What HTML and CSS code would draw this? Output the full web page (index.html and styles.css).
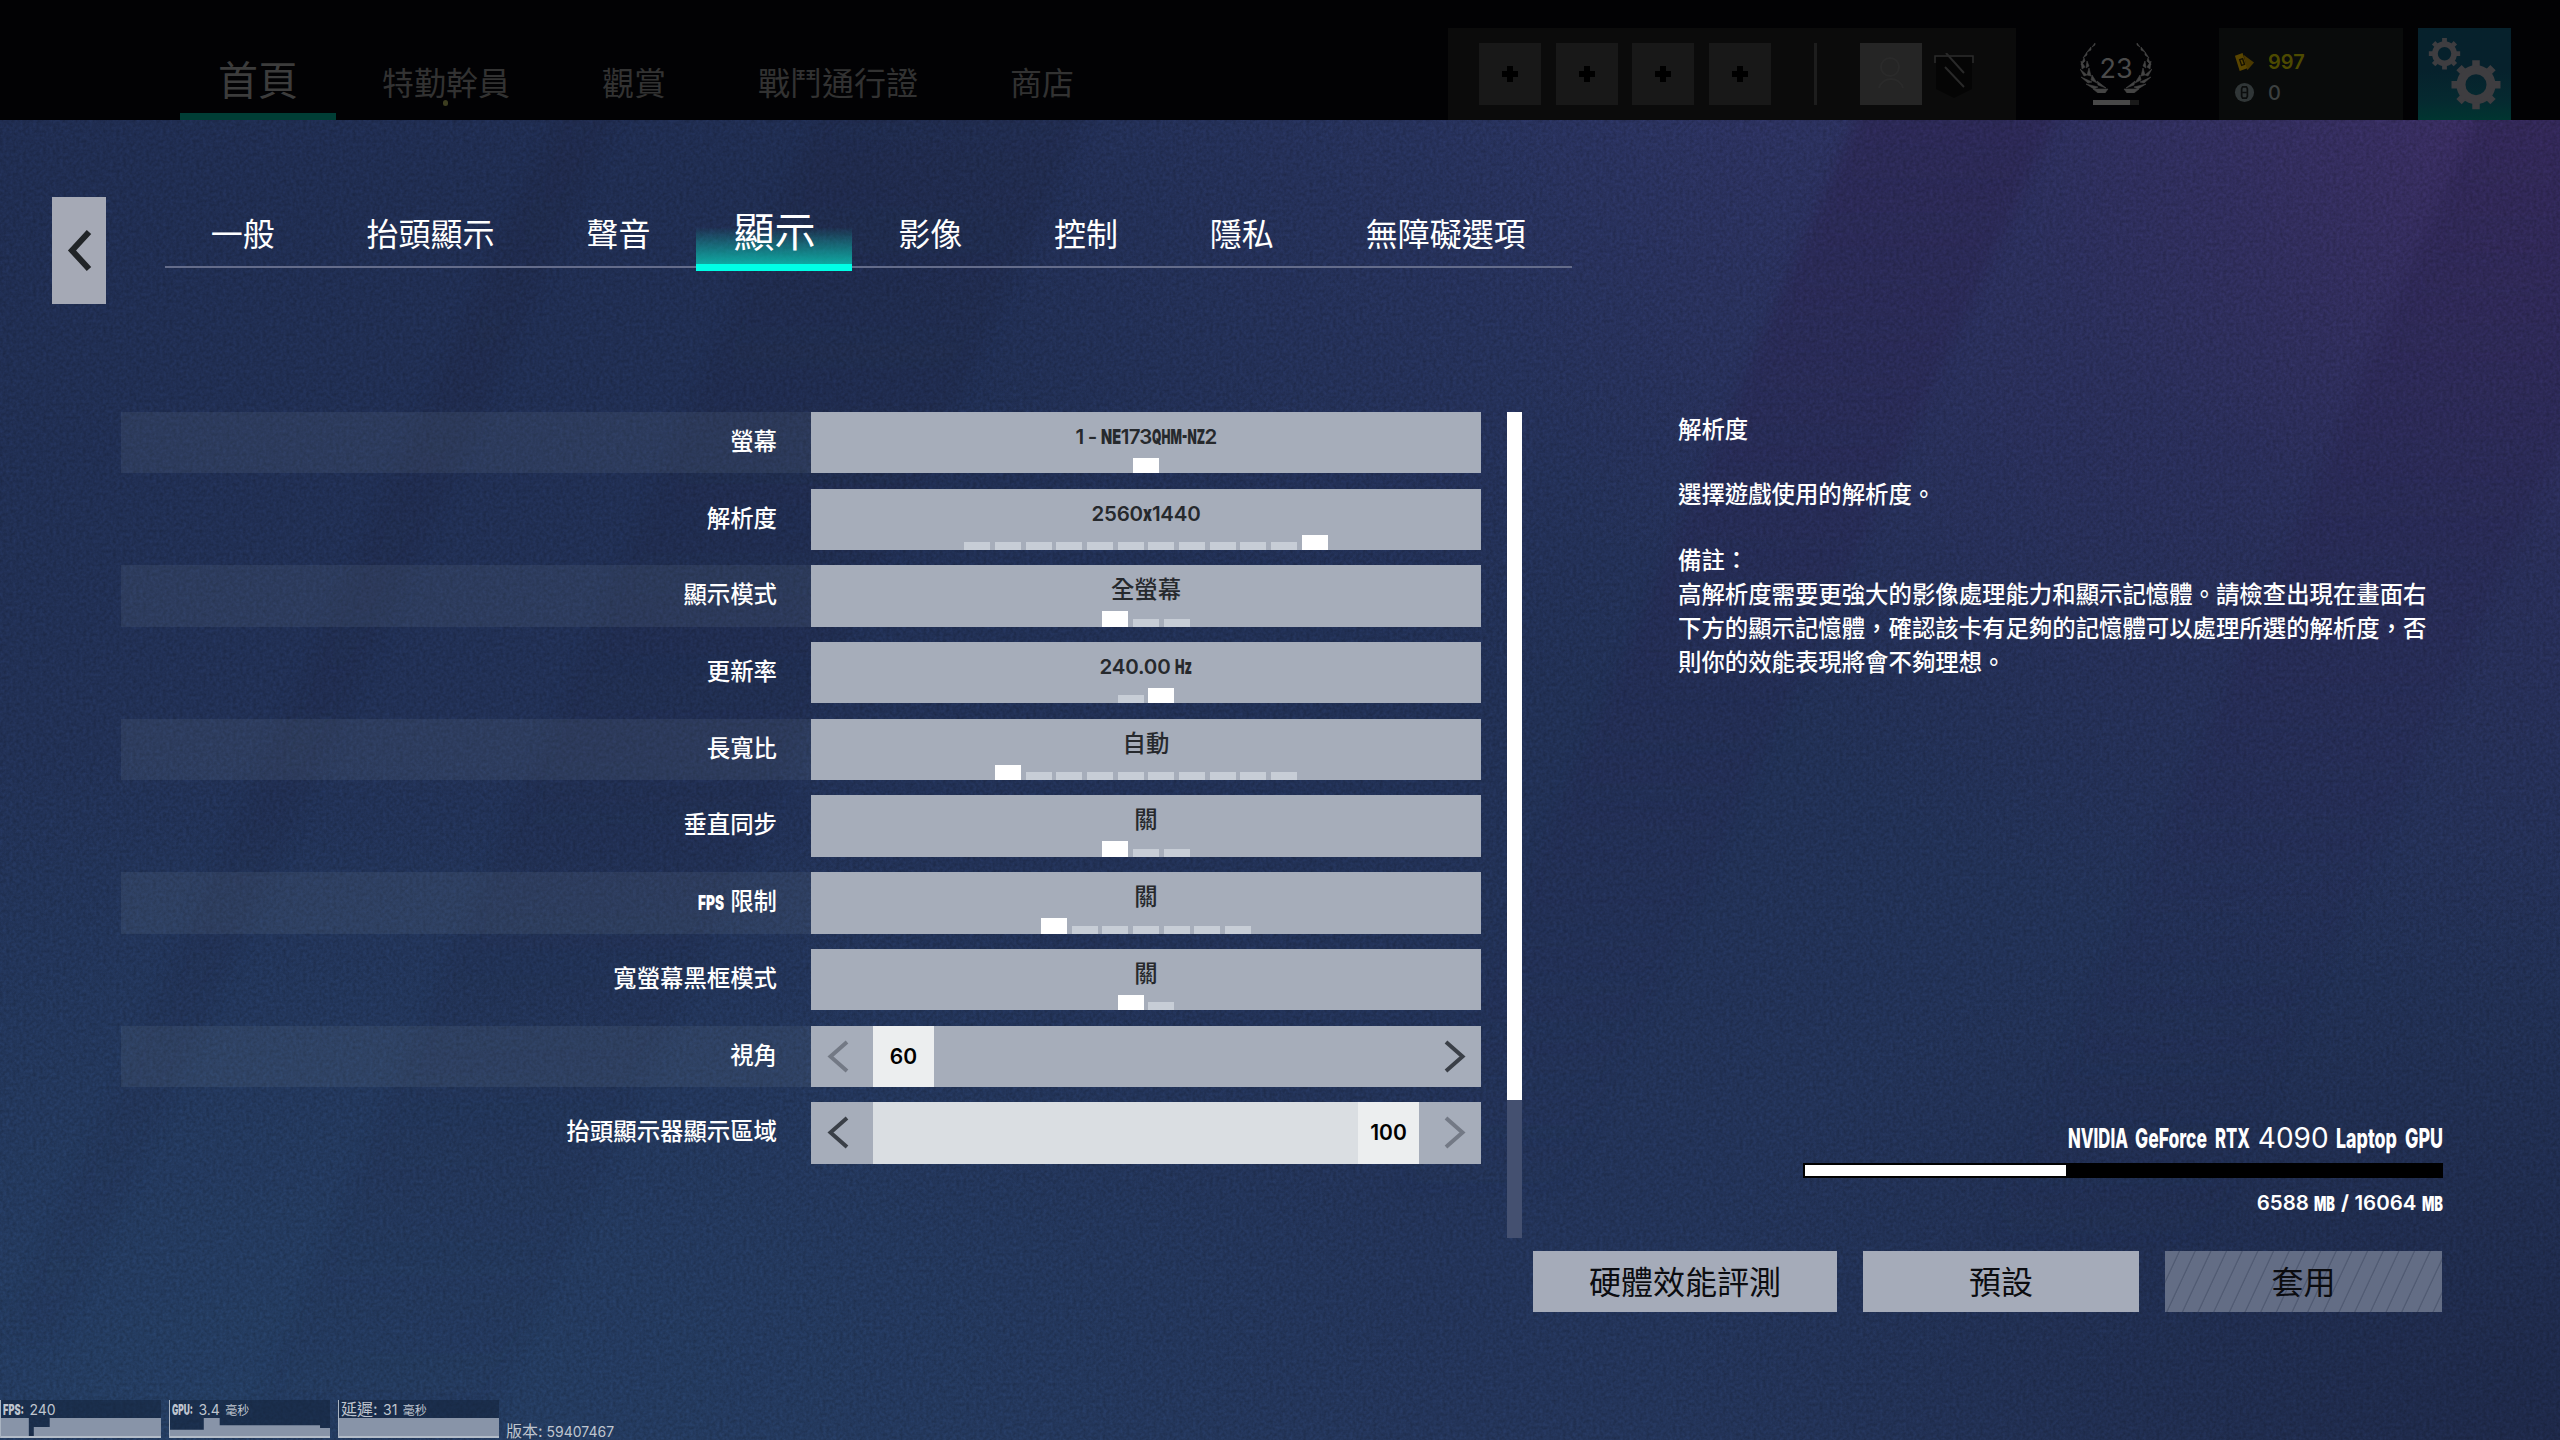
FILE: index.html
```html
<!DOCTYPE html>
<html lang="zh-Hant">
  <head>
    <meta charset="utf-8">
    <title>顯示</title>
    <link rel="stylesheet" href="styles.css">
  </head>
  <body>
    <!-- backdrop: light streaks and grain -->
    <svg class="backdrop" viewBox="0 0 2560 1440" preserveAspectRatio="none">
      <defs>
        <linearGradient id="fadeDown" x1="0" y1="0" x2="0" y2="1">
          <stop offset="0" stop-color="#2c2450" stop-opacity=".6"/>
          <stop offset="1" stop-color="#202750" stop-opacity="0"/>
        </linearGradient>
        <linearGradient id="dark" x1="0" y1="0" x2="0" y2="1">
          <stop offset="0" stop-color="#1e2746" stop-opacity=".4"/>
          <stop offset="1" stop-color="#1e2746" stop-opacity=".1"/>
        </linearGradient>
        <filter id="soft" color-interpolation-filters="sRGB"><feGaussianBlur stdDeviation="7"/></filter>
        <filter id="grain" x="0" y="0" width="100%" height="100%" color-interpolation-filters="sRGB">
          <feTurbulence type="fractalNoise" baseFrequency=".3" numOctaves="2" seed="4"/>
          <feColorMatrix values="1 0 0 0 0  1 0 0 0 0  1 0 0 0 0  0 0 0 0 1"/>
        </filter>
      </defs>
      <g filter="url(#soft)">
        <polygon points="1860,110 2060,110 1560,1200 1390,1200" fill="url(#fadeDown)"/>
        <polygon points="2480,110 2570,110 2570,420 2200,1250 1980,1250" fill="url(#fadeDown)"/>
        <polygon points="820,110 1090,110 480,1440 240,1440" fill="url(#dark)"/>
        <polygon points="560,110 620,110 60,1340 0,1340" fill="url(#dark)"/>
      </g>
      <rect class="grain" width="2560" height="1440" filter="url(#grain)"/>
    </svg>

    <header>
      <nav class="menu">
        <a class="current">首頁</a>
        <a class="new">特勤幹員</a>
        <a>觀賞</a>
        <a>戰鬥通行證</a>
        <a>商店</a>
      </nav>
      <div class="squad">
        <b class="slot"></b><b class="slot"></b><b class="slot"></b><b class="slot"></b>
        <i class="divider"></i>
        <svg class="avatar" viewBox="0 0 62 62">
          <circle cx="30" cy="24" r="9"/>
          <path d="M19 45c3-12 21-12 24 0"/>
        </svg>
        <svg class="banner" viewBox="0 0 40 46">
          <path d="M2 4h36v32l-18 9-18-9z" fill="#050505"/>
          <path d="M1 10V3h38v7" fill="none" stroke="#2c2c2c" stroke-width="1.5"/>
          <path d="M12 0l18 20M11 14l19 20" stroke="#292929" stroke-width="2"/>
        </svg>
      </div>
      <div class="rank">
        <svg viewBox="0 0 72 50">
          <defs>
            <g id="branch">
              <path d="M15 0l-3 4 3-2zM11 4l-4 5 4-2zM7 9l-4 6 4-3zM4 15l-3 7 4-4zM1 18l1 8 3-2zM7 18l-1 7 3-2zM0 26l4 7 3-1zM9 25l-2 7 4 1zM1 34l7 6 4-1zM12 32l-1 5 6 3zM6 41l8 5 4-2zM17 38l1 4 8 3zM13 46h15l-3 4h-7z"/>
            </g>
          </defs>
          <use href="#branch"/>
          <use href="#branch" transform="translate(72 0) scale(-1 1)"/>
        </svg>
        <span>23</span>
        <div class="xp"><i></i></div>
      </div>
      <div class="wallet">
        <div class="renown">
          <svg viewBox="0 0 22 22"><path d="M10 3l11 8-7 8z" fill="#4a3800"/><path d="M1 4l8-3 5 16-8 3z" fill="#594500"/><path d="M6 8l3-1 2 6-3 1z" fill="none" stroke="#171200" stroke-width="1.5"/></svg>
          <span>997</span>
        </div>
        <div class="credits">
          <svg viewBox="0 0 22 22"><circle cx="11" cy="11" r="10" fill="#303637"/><path d="M9 5h4l1 2v8l-1 2H9l-1-2V7zM9 11h4" fill="none" stroke="#0b0d0d" stroke-width="1.8"/></svg>
          <span>0</span>
        </div>
      </div>
      <svg class="settings" viewBox="0 0 93 92">
        <defs>
          <g id="gear">
            <circle r="15" fill="none" stroke-width="9"/>
            <path d="M0-18V-24.5M0 18V24.5M-18 0H-24.5M18 0H24.5M-13-13L-17-17M13 13L17 17M-13 13L-17 17M13-13L17-17" stroke-width="7.5"/>
          </g>
        </defs>
        <use href="#gear" transform="translate(26.500 25.700) scale(.64)"/>
        <use href="#gear" transform="translate(58 56.700)"/>
      </svg>
    </header>

    <div class="top">
      <a class="back"><svg viewBox="0 0 54 107"><path d="M37 35L20 53.500 37 72"/></svg></a>
      <nav class="tabs">
        <a>一般</a>
        <a>抬頭顯示</a>
        <a>聲音</a>
        <a class="active">顯示</a>
        <a>影像</a>
        <a>控制</a>
        <a>隱私</a>
        <a>無障礙選項</a>
      </nav>
    </div>

    <main>
      <ul class="options">
        <li>
          <label>螢幕</label>
          <div class="choice">
            <span class="mixed tight">1 - <svg class="narrow" width="20" height="15"><text y="15" textLength="20" lengthAdjust="spacingAndGlyphs">NE</text></svg>173<svg class="narrow" width="53" height="15"><text y="15" textLength="53" lengthAdjust="spacingAndGlyphs">QHM-NZ</text></svg>2</span>
            <div class="pips"><i class="on"></i></div>
          </div>
        </li>
        <li>
          <label>解析度</label>
          <div class="choice">
            <span class="mixed">2560<svg class="narrow" width="9" height="15"><text y="15" textLength="9" lengthAdjust="spacingAndGlyphs">x</text></svg>1440</span>
            <div class="pips"><i></i><i></i><i></i><i></i><i></i><i></i><i></i><i></i><i></i><i></i><i></i><i class="on"></i></div>
          </div>
        </li>
        <li>
          <label>顯示模式</label>
          <div class="choice">
            <span>全螢幕</span>
            <div class="pips"><i class="on"></i><i></i><i></i></div>
          </div>
        </li>
        <li>
          <label>更新率</label>
          <div class="choice">
            <span class="mixed">240.00 <svg class="narrow" width="17" height="15"><text y="15" textLength="17" lengthAdjust="spacingAndGlyphs">Hz</text></svg></span>
            <div class="pips"><i></i><i class="on"></i></div>
          </div>
        </li>
        <li>
          <label>長寬比</label>
          <div class="choice">
            <span>自動</span>
            <div class="pips"><i class="on"></i><i></i><i></i><i></i><i></i><i></i><i></i><i></i><i></i><i></i></div>
          </div>
        </li>
        <li>
          <label>垂直同步</label>
          <div class="choice">
            <span>關</span>
            <div class="pips"><i class="on"></i><i></i><i></i></div>
          </div>
        </li>
        <li>
          <label><svg class="narrow" width="26" height="15"><text y="15" textLength="26" lengthAdjust="spacingAndGlyphs">FPS</text></svg> 限制</label>
          <div class="choice">
            <span>關</span>
            <div class="pips"><i class="on"></i><i></i><i></i><i></i><i></i><i></i><i></i></div>
          </div>
        </li>
        <li>
          <label>寬螢幕黑框模式</label>
          <div class="choice">
            <span>關</span>
            <div class="pips"><i class="on"></i><i></i></div>
          </div>
        </li>
        <li>
          <label>視角</label>
          <div class="slider">
            <svg class="arrow off" viewBox="0 0 62 61"><path d="M36 16L19.500 30.500 36 45"/></svg>
            <div class="track"><b>60</b></div>
            <svg class="arrow" viewBox="0 0 62 61"><path d="M27 16L43.500 30.500 27 45"/></svg>
          </div>
        </li>
        <li>
          <label>抬頭顯示器顯示區域</label>
          <div class="slider">
            <svg class="arrow" viewBox="0 0 62 61"><path d="M36 16L19.500 30.500 36 45"/></svg>
            <div class="track full"><b>100</b></div>
            <svg class="arrow off" viewBox="0 0 62 61"><path d="M27 16L43.500 30.500 27 45"/></svg>
          </div>
        </li>
      </ul>
      <div class="scrollbar"><i></i></div>
      <aside>
        <h2>解析度</h2>
        <p>選擇遊戲使用的解析度。</p>
        <p class="note">備註：<br>高解析度需要更強大的影像處理能力和顯示記憶體。請檢查出現在畫面右<br>下方的顯示記憶體，確認該卡有足夠的記憶體可以處理所選的解析度，否<br>則你的效能表現將會不夠理想。</p>
        <div class="gpu">
          <div class="name">
            <svg class="narrow" width="60" height="20"><text y="20" textLength="60" lengthAdjust="spacingAndGlyphs">NVIDIA</text></svg>
            <svg class="narrow" width="72" height="20"><text y="20" textLength="72" lengthAdjust="spacingAndGlyphs">GeForce</text></svg>
            <svg class="narrow" width="35" height="20"><text y="20" textLength="35" lengthAdjust="spacingAndGlyphs">RTX</text></svg>
            <span>4090</span>
            <svg class="narrow" width="61" height="20"><text y="20" textLength="61" lengthAdjust="spacingAndGlyphs">Laptop</text></svg>
            <svg class="narrow" width="38" height="20"><text y="20" textLength="38" lengthAdjust="spacingAndGlyphs">GPU</text></svg>
          </div>
          <div class="vram"><i style="width: 41%"></i></div>
          <div class="memory">
            <span>6588</span>
            <svg class="narrow" width="21" height="15"><text y="15" textLength="21" lengthAdjust="spacingAndGlyphs">MB</text></svg>
            <b>/</b>
            <span>16064</span>
            <svg class="narrow" width="21" height="15"><text y="15" textLength="21" lengthAdjust="spacingAndGlyphs">MB</text></svg>
          </div>
        </div>
      </aside>
    </main>

    <div class="buttons">
      <a class="wide">硬體效能評測</a>
      <a>預設</a>
      <a class="disabled">套用</a>
    </div>

    <footer>
      <div class="stat">
        <div><svg class="narrow" width="21" height="11"><text y="11" textLength="21" lengthAdjust="spacingAndGlyphs">FPS:</text></svg> 240</div>
        <svg class="graph" viewBox="0 0 161 20" preserveAspectRatio="none"><path d="M0 0H28V20H33V10H49V0H161V20H0z"/></svg>
      </div>
      <div class="stat">
        <div><svg class="narrow" width="21" height="11"><text y="11" textLength="21" lengthAdjust="spacingAndGlyphs">GPU:</text></svg> 3.4 <small>毫秒</small></div>
        <svg class="graph" viewBox="0 0 161 20" preserveAspectRatio="none"><path d="M0 13H34V0H50V8H151V11H161V20H0z"/></svg>
      </div>
      <div class="stat">
        <div><em>延遲:</em> 31 <small>毫秒</small></div>
        <svg class="graph" viewBox="0 0 161 20" preserveAspectRatio="none"><path d="M0 0H161V20H0z"/></svg>
      </div>
      <div class="version"><em>版本:</em> 59407467</div>
    </footer>
  </body>
</html>
```

FILE: styles.css
```css
* {
  box-sizing: border-box;
}

body {
  margin: 0;
  width: 2560px;
  height: 1440px;
  overflow: hidden;
  position: relative;
  color: #fff;
  background: #202f57;
  font-family: Inter, "Noto Sans CJK TC", sans-serif;
}

.backdrop {
  position: absolute;
  z-index: -1;
  top: 0;
  left: 0;
  width: 2560px;
  height: 1440px;
  background:
    radial-gradient(ellipse 1100px 900px at 2560px 100px, rgba(62, 44, 98, 0.9), rgba(48, 44, 92, 0.5) 50%, rgba(36, 42, 84, 0)),
    radial-gradient(ellipse 900px 600px at 1750px 100px, rgba(46, 54, 102, 0.7), rgba(46, 54, 102, 0)),
    radial-gradient(ellipse 1200px 700px at 250px 1440px, rgba(36, 64, 100, 0.75), rgba(36, 64, 100, 0)),
    radial-gradient(ellipse 900px 600px at 2560px 1440px, rgba(28, 37, 68, 0.8), rgba(28, 37, 68, 0)),
    linear-gradient(#1f2c50, #233459);
}

.grain {
  mix-blend-mode: overlay;
  opacity: 0.2;
}

/* condensed latin words */
.narrow {
  overflow: visible;
  fill: currentColor;
  font-weight: 900;
}

/* header */
header {
  display: flex;
  height: 120px;
  background: #020204;
}

.menu {
  display: flex;
  margin-left: 180px;
  width: 1268px;
}

.menu a {
  position: relative;
  padding: 0 46px;
  font-size: 32px;
  line-height: 168px;
  height: 120px;
  color: #323232;
}

.menu .current {
  width: 156px;
  padding: 0;
  text-align: center;
  font-size: 40px;
  line-height: 162px;
  color: #3c3c3c;
  border-bottom: 7px solid #003d35;
}

.menu .new::after {
  content: "";
  position: absolute;
  left: 107px;
  top: 100px;
  width: 5px;
  height: 6px;
  border-radius: 3px;
  background: #3c3d20;
}

.squad {
  display: flex;
  margin-top: 28px;
  padding: 15px 0 0 31px;
  width: 568px;
  background: #0b0b0b;
}

.slot {
  width: 62px;
  height: 62px;
  margin-right: 14.6px;
  background:
    linear-gradient(#000, #000) center / 16px 6px no-repeat,
    linear-gradient(#000, #000) center / 6px 16px no-repeat,
    #181818;
}

.divider {
  width: 3px;
  height: 62px;
  margin: 0 43px 0 29px;
  background: #1d1d1d;
}

.avatar {
  width: 62px;
  height: 62px;
  background: #252525;
  fill: none;
  stroke: #2a2a2a;
  stroke-width: 2;
}

.banner {
  width: 40px;
  height: 46px;
  margin: 10px 0 0 12px;
}

.rank {
  position: relative;
  width: 203px;
  padding: 43px 3px 0 0;
  text-align: center;
}

.rank svg {
  display: block;
  width: 72px;
  height: 50px;
  margin: 0 auto;
  fill: #444;
  stroke: #444;
  stroke-width: 0.6;
}

.rank span {
  position: absolute;
  left: 0;
  right: 3px;
  top: 52px;
  font-size: 27px;
  line-height: 33px;
  color: #4a4a4a;
}

.xp {
  width: 46px;
  height: 5px;
  margin: 7px auto 0;
  background: #1a1a1a;
}

.xp i {
  display: block;
  width: 37px;
  height: 5px;
  background: #484848;
}

.wallet {
  width: 184px;
  margin-top: 28px;
  padding: 19px 0 0 15px;
  background: #090b0b;
  font-size: 20px;
  font-weight: 500;
}

.wallet div {
  display: flex;
  align-items: center;
  height: 30.5px;
  gap: 13px;
}

.wallet svg {
  width: 21px;
  height: 21px;
}

.renown {
  color: #4d4a00;
  font-weight: 600;
}

.credits {
  color: #3c4040;
}

.settings {
  width: 93px;
  height: 92px;
  margin: 28px 0 0 15px;
  background: linear-gradient(#06212c 45%, #052a30 80%, #003530);
  stroke: #3e3d40;
}

/* tabs */
.top {
  display: flex;
  padding: 77px 0 0 52px;
}

.back {
  width: 54px;
  height: 107px;
  background: #a5a9b5;
}

.back path {
  fill: none;
  stroke: #212427;
  stroke-width: 6;
}

.tabs {
  display: flex;
  margin-left: 59px;
  height: 71px;
  border-bottom: 2px solid #646c8a;
}

.tabs a {
  height: 71px;
  padding: 0 46px 0 45.8px;
  font-size: 32px;
  line-height: 75px;
}

.tabs .active {
  position: relative;
  width: 156px;
  height: 74px;
  padding: 0;
  text-align: center;
  font-size: 41px;
  line-height: 70px;
  background: linear-gradient(rgba(0, 255, 230, 0) 45%, rgba(12, 190, 176, 0.85));
  border-bottom: 7px solid #00ffe6;
}

/* options */
main {
  display: flex;
  height: 826px;
  margin: 108px 0 0 121px;
}

.options {
  width: 1360px;
  margin: 0;
  padding: 0;
  list-style: none;
}

.options li {
  display: flex;
  height: 61.4px;
  margin-bottom: 15.3px;
}

.options label {
  width: 690px;
  padding-right: 34px;
  text-align: right;
  font-size: 23.4px;
  font-weight: 500;
  line-height: 60px;
}

.options label .narrow {
  font-size: 20.5px;
}

.options li:nth-child(odd) label {
  background: rgba(150, 165, 175, 0.11);
}

.choice {
  display: flex;
  flex-direction: column;
  justify-content: space-between;
  width: 670px;
  background: #a6adba;
  text-align: center;
  font-weight: 500;
  color: #26292d;
}

.choice span {
  height: 40px;
  line-height: 50px;
  font-size: 23.4px;
}

.choice .mixed {
  font-size: 20.5px;
  font-weight: 600;
  letter-spacing: -0.2px;
}

.choice .tight {
  letter-spacing: -0.8px;
}

.mixed .narrow {
  letter-spacing: 0;
}

.pips {
  display: flex;
  align-items: flex-end;
  justify-content: center;
  gap: 4.7px;
}

.pips i {
  width: 26px;
  height: 8px;
  background: #c7cdd6;
}

.pips .on {
  height: 15.5px;
  background: #fff;
}

.slider {
  display: flex;
  width: 670px;
  background: #a6adba;
}

.arrow {
  width: 62px;
  height: 61px;
  fill: none;
  stroke: #3a3f47;
  stroke-width: 4;
}

.arrow.off {
  stroke: #737985;
}

.track {
  flex: 1;
  display: flex;
}

.track.full {
  justify-content: flex-end;
  background: #dadee2;
}

.track b {
  width: 61px;
  background: #eceeef;
  color: #000;
  text-align: center;
  font-size: 21px;
  font-weight: 600;
  line-height: 62px;
}

.scrollbar {
  width: 15px;
  height: 826px;
  margin-left: 26px;
  background: #445070;
}

.scrollbar i {
  display: block;
  height: 688px;
  background: #fff;
}

/* description */
aside {
  display: flex;
  flex-direction: column;
  width: 765px;
  margin-left: 156px;
  font-size: 23.4px;
  font-weight: 500;
  line-height: 33.7px;
}

h2 {
  margin: 1px 0 0;
  font-size: 23.4px;
  font-weight: 500;
}

aside p {
  margin: 31px 0 0;
  white-space: nowrap;
}

aside .note {
  margin-top: 33px;
}

.gpu {
  margin-top: auto;
  padding-bottom: 25px;
}

.name,
.memory {
  display: flex;
  justify-content: flex-end;
  align-items: flex-end;
}

.name {
  gap: 7.7px;
  font-size: 27px;
  line-height: 20px;
}

.name .narrow {
  font-weight: 800;
}

.name span {
  font-size: 28px;
  font-weight: 400;
}

.vram {
  width: 640px;
  height: 15px;
  margin: 15px 0 15px auto;
  padding: 2px;
  background: #000;
}

.vram i {
  display: block;
  height: 11px;
  background: #fff;
}

.memory {
  gap: 5.5px;
  font-size: 20.5px;
  line-height: 20px;
}

.memory span {
  font-weight: 600;
}

.memory .narrow {
  margin-bottom: 2.5px;
}

.buttons {
  display: flex;
  justify-content: flex-end;
  gap: 26px;
  margin-top: 13px;
  padding-right: 118px;
}

.buttons a {
  width: 276px;
  height: 61px;
  background: #a5abb9;
  color: #0b0c10;
  text-align: center;
  font-size: 32px;
  line-height: 63px;
}

.buttons .wide {
  width: 304px;
}

.buttons .disabled {
  width: 277px;
  background: repeating-linear-gradient(115deg, #636d85 0, #636d85 12px, #515b73 13px, #515b73 13.5px, #636d85 14.2px);
}

/* performance overlay */
footer {
  position: absolute;
  left: 0;
  top: 1400px;
  display: flex;
  gap: 8px;
  color: #bfc5cf;
  font-size: 14px;
}

.stat {
  width: 161px;
  height: 38px;
  border-left: 1px solid #a9b3c1;
  background: rgba(20, 36, 62, 0.6);
}

.stat div {
  height: 18px;
  padding-left: 2px;
  line-height: 19px;
  word-spacing: 1.5px;
  white-space: nowrap;
}

.stat small {
  font-size: 12px;
}

footer em {
  font-size: 16px;
  font-style: normal;
}

.graph {
  display: block;
  width: 160px;
  height: 20px;
  fill: #8894a8;
  border-bottom: 2px solid #b3bcc8;
}

.version {
  margin-left: -1px;
  padding-top: 19px;
  line-height: 24px;
}
```
